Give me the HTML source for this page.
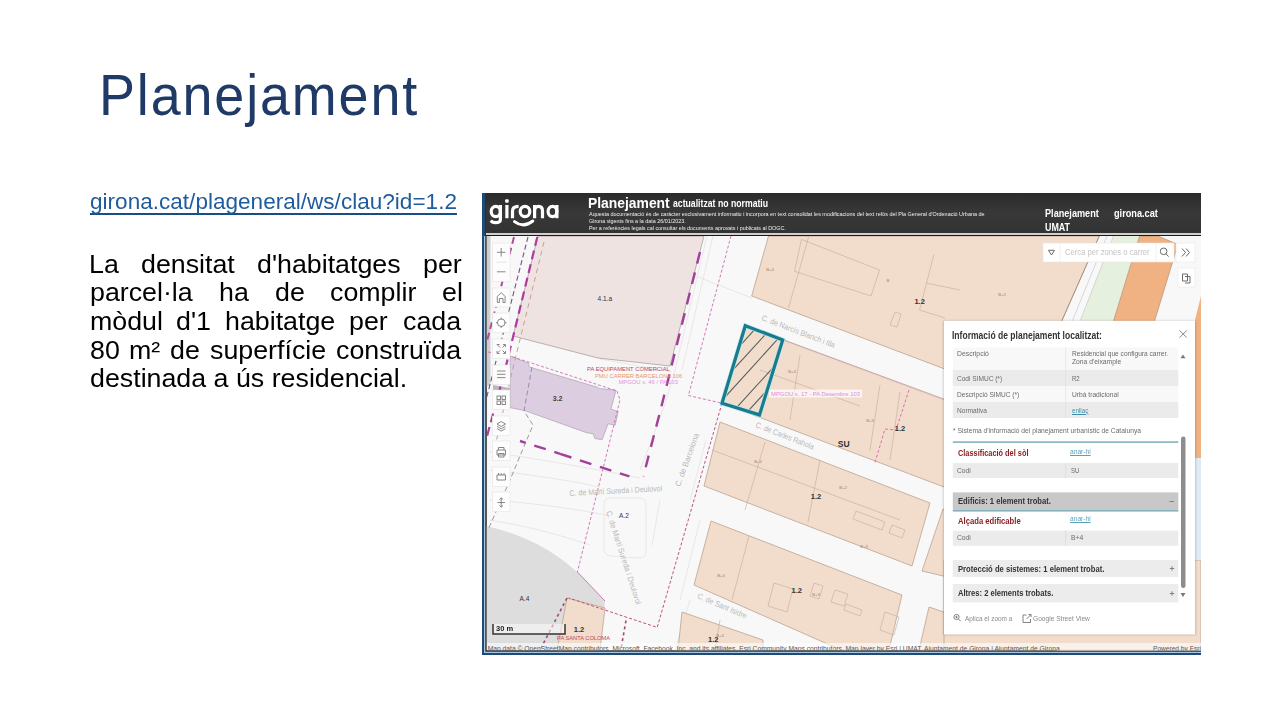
<!DOCTYPE html>
<html><head><meta charset="utf-8">
<style>
*{margin:0;padding:0;box-sizing:border-box}
html,body{width:1280px;height:720px;background:#fff;overflow:hidden;position:relative;font-family:"Liberation Sans",sans-serif}
.tx{position:absolute;white-space:nowrap;line-height:1;transform-origin:0 0;font-family:"Liberation Sans",sans-serif}
svg{position:absolute;left:0;top:0}
svg text{font-family:"Liberation Sans",sans-serif}
</style></head><body>
<svg width="1280" height="720" viewBox="0 0 1280 720">
<defs>
<clipPath id="mc"><rect x="486.8" y="236" width="714.2" height="414.5"/></clipPath>
<filter id="sh" x="-10%" y="-10%" width="120%" height="120%"><feGaussianBlur stdDeviation="1.2"/></filter>
</defs>
<!-- frame -->
<rect x="482" y="193" width="719" height="462" fill="#1d4a78"/>
<rect x="484" y="236" width="717" height="417" fill="#a9c6de"/>
<rect x="485.3" y="193" width="715.7" height="458.7" fill="#2a2a2a"/>
<linearGradient id="hg" x1="0" y1="0" x2="0" y2="1"><stop offset="0" stop-color="#2b2b2b"/><stop offset="0.5" stop-color="#383838"/><stop offset="1" stop-color="#333"/></linearGradient>
<rect x="486" y="193" width="715" height="40" fill="url(#hg)"/>
<rect x="486" y="233" width="715" height="2" fill="#cfcfcf"/>
<rect x="486" y="235" width="715" height="1.2" fill="#1a1a1a"/>
<g clip-path="url(#mc)">
<rect x="486" y="236" width="715" height="414" fill="#f8f8f8"/>
<rect x="486" y="236" width="4.5" height="150" fill="#cfcfcf"/>
<!-- road light lines -->
<g fill="none" stroke="#e2e2e2" stroke-width="0.8">
<path d="M707,236 L675,370 Q668,400 640,470"/>
<path d="M713,236 L682,370"/>
<path d="M752,298 L680,270"/>
<path d="M600,359 L672,372"/>
<path d="M490,452 Q560,462 640,478"/>
<path d="M490,470 Q560,478 600,487"/>
<path d="M490,500 Q560,505 610,516"/>
<path d="M490,520 Q540,528 590,545"/>
<path d="M604,505 Q603,498 612,498 L640,498 Q646,498 646,506 L646,552 Q646,558 638,558 L612,556 Q604,556 604,548 Z"/>
<path d="M660,500 L652,545"/>
<path d="M706,440 L690,500 M700,520 L680,600 M690,600 L675,650"/>
</g>
<!-- pink block 4.1.a -->
<polygon points="538,236 704,236 670,366 598,358 513,336" fill="#efe3e2" stroke="#8f8686" stroke-width="0.6"/>
<!-- purple block 3.2 -->
<polygon points="510.2,356 528.4,363.2 529.2,366.9 597.7,387.3 599.2,388.5 616,390.2 610.9,409.2 618.2,411.4 615.2,425.2 608,423.8 602.1,439.8 594.8,438.4 593.4,434 586,432.5 524.8,410.6 510.2,407.7" fill="#dccde0" stroke="#a096a8" stroke-width="0.6"/>
<polygon points="493,385 510,388 510,395 493,392" fill="#bdb5c0"/>
<!-- gray A.4 -->
<path d="M486,526 Q540,538 577,572 L605,601 L600,650 L486,650 Z" fill="#dddddd"/>
<!-- beige blocks -->
<g fill="#f2dccb" stroke="#b39a86" stroke-width="0.7">
<polygon points="768.5,236 1099.3,236 1026.8,400 751.7,296"/>
<polygon points="745.3,325.7 960,405 960,493 722,403.2"/>
<polygon points="720,422 930,503 912,566 704,486"/>
<polygon points="943,509 960,515 960,580 922,571"/>
<polygon points="711,521 902,595 889,650 841,650 694,585"/>
<polygon points="682,612 763,640 763,650 678,650"/>
<polygon points="929,607 1201,700 1201,650 919,650"/>
<rect x="944" y="560" width="257" height="90"/>
<polygon points="567,598 605,608 600,650 557,650"/>
</g>
<!-- parcel inner lines -->
<g fill="none" stroke="#c4ab98" stroke-width="0.6">
<path d="M808.6,237 L788.5,308 M801.5,239.4 L879.5,270 L871,296 L794.5,271.3 Z M933.8,254.8 L919.6,310 L945,318 M926,283 L960,290 M895,312 L890,325 L897,327 L901,314 Z"/>
<path d="M760,370 L860,406 M800,355 L790,420 M880,385 L870,450 M900,392 L890,460"/>
<path d="M712,450 L900,520 M765,442 L745,510 M820,460 L808,522 M856,511 L885,522 L882,530 L853,519 Z M892,525 L905,530 L902,538 L889,533 Z M774,583 L793,589 L787,612 L768,606 Z M814,583 L823,586 L819,599 L810,596 Z M835,590 L848,594 L844,606 L831,602 Z M846,604 L862,610 L860,616 L844,610 Z M885,612 L899,617 L894,635 L880,630 Z"/>
<path d="M749,536 L732,600"/>
<path d="M720,620 L715,650"/>
</g>
<polygon points="1113.5,236 1139.5,236 1089.3,400 1049,400" fill="#e6f0de"/>
<polygon points="1139.5,236 1158,236 1178,244.5 1130.5,400 1089.3,400" fill="#f0b282" stroke="#9a7a60" stroke-width="0.5"/>
<path d="M1099.3,236 L1026.8,400" stroke="#a08a78" stroke-width="0.8"/>
<path d="M1113.5,236 L1049,400 M1107,236 L1040,400" stroke="#c9c9c9" stroke-width="0.7"/>
<polygon points="1201,296 1201,458 1195,458 1195,320" fill="#f0b282"/>
<rect x="1195" y="458" width="6" height="102" fill="#dfeaf2"/>

<!-- dashed lines -->
<g fill="none" stroke-linecap="butt">
<path d="M514,237 L486,345" stroke="#b04aa0" stroke-width="2" stroke-dasharray="7,4"/>
<path d="M528,237 L486,400" stroke="#7d4d8d" stroke-width="1.1" stroke-dasharray="5,3"/>
<path d="M537.3,237 L505,370 L486,440" stroke="#b03aa0" stroke-width="2.2" stroke-dasharray="9,5"/>
<path d="M544,242 L512,372 L492,460" stroke="#c9a093" stroke-width="1" stroke-dasharray="5,4"/>
<path d="M700,252 L661.3,407 L643.3,476.4" stroke="#a0409a" stroke-width="2.4" stroke-dasharray="12,9"/>
<path d="M560,453.8 L629.4,476.4" stroke="#a0409a" stroke-width="2.4" stroke-dasharray="12,9"/>
<path d="M520,441 L560,453.8" stroke="#a0409a" stroke-width="2.4" stroke-dasharray="12,9" stroke-dashoffset="6"/>
<path d="M731,236 L688.4,395.5 L722,403.2" stroke="#d068b0" stroke-width="0.9" stroke-dasharray="3,2"/>
<path d="M488,352 L510,356 L617,391 L620,400 L577.4,572" stroke="#d068b0" stroke-width="0.9" stroke-dasharray="3,2"/>
<path d="M722,403.2 L657.2,627.4 L568.7,598" stroke="#c05080" stroke-width="1" stroke-dasharray="3,2"/>
<path d="M577.4,572 L605,601" stroke="#d068b0" stroke-width="0.9"/>
<path d="M532,367 L524,411 L533,425 L510,480 L488,530" stroke="#8a7a98" stroke-width="0.8" stroke-dasharray="5,3"/>
<path d="M567,598 L540,650" stroke="#a04a70" stroke-width="1.6" stroke-dasharray="3,3"/>
<path d="M626,620.5 L620.8,650" stroke="#a04a70" stroke-width="1.6" stroke-dasharray="3,3"/>
<path d="M909,390 L896,430 L885,429 L875,462.5" stroke="#d068b0" stroke-width="0.9" stroke-dasharray="3,2"/>
<path d="M782.7,340 L944,400" stroke="#d090c8" stroke-width="0.6" opacity="0.6"/>
</g>
<!-- teal parcel -->
<clipPath id="tp"><polygon points="745.3,325.7 782.7,340 759.5,414.9 722,403.2"/></clipPath>
<g stroke="#555f62" stroke-width="1.1" fill="none" clip-path="url(#tp)">
<path d="M720,368 L765,318 M720,384 L775,324 M716,407 L786,330 M728,417 L790,349 M740,420 L790,365 M760,420 L790,388"/>
</g>
<polygon points="745.3,325.7 782.7,340 759.5,414.9 722,403.2" fill="none" stroke="#bfeaf0" stroke-width="4.6"/>
<polygon points="745.3,325.7 782.7,340 759.5,414.9 722,403.2" fill="none" stroke="#187c8c" stroke-width="3.2"/>
<!-- labels -->
<g font-size="6.5" fill="#333" text-anchor="middle">
<text x="604.8" y="301">4.1.a</text>
<text x="557.6" y="400.5" font-size="7" font-weight="bold" fill="#444">3.2</text>
<text x="624" y="518">A.2</text>
<text x="524.5" y="601">A.4</text>
</g>
<g font-size="7.5" font-weight="bold" fill="#333" text-anchor="middle">
<text x="919.6" y="303.5">1.2</text>
<text x="843.75" y="446.5" font-size="8.5">SU</text>
<text x="900" y="430.5">1.2</text>
<text x="816" y="499">1.2</text>
<text x="796.7" y="593">1.2</text>
<text x="579" y="631.5">1.2</text>
<text x="713.3" y="641.5">1.2</text>
</g>
<g font-size="4.2" fill="#9a8070" text-anchor="middle">
<text x="770" y="271">B+4</text><text x="888" y="282">B</text><text x="870" y="422">B+3</text>
<text x="792" y="373">B+4</text><text x="758" y="463">B+4</text><text x="843" y="489">B+2</text><text x="864" y="548">B+3</text>
<text x="721" y="577">B+4</text><text x="816" y="596">B+3</text><text x="720" y="637">B+4</text><text x="1002" y="296">B+2</text>
</g>
<g font-size="5.8">
<text x="587" y="370.7" fill="#c04a55" textLength="82.8" lengthAdjust="spacingAndGlyphs">PA EQUIPAMENT COMERCIAL</text>
<text x="595" y="377.8" fill="#e39a68" textLength="87.3" lengthAdjust="spacingAndGlyphs">PMU CARRER BARCELONA 106</text>
<text x="618.5" y="384.4" fill="#e590e0" textLength="59.5" lengthAdjust="spacingAndGlyphs">MPGOU x. 46 / PA 103</text>
<rect x="769" y="389.5" width="93" height="8" fill="#fff" opacity="0.7"/>
<text x="771" y="396" fill="#e08ae0" textLength="89" lengthAdjust="spacingAndGlyphs">MPGOU x. 17 - PA Desembre 103</text>
<text x="557" y="639.5" fill="#c04a55" textLength="53" lengthAdjust="spacingAndGlyphs">PA SANTA COLOMA</text>
</g>
<g font-size="8" fill="#b8b8b8">
<text transform="translate(761,320) rotate(21)" textLength="78" lengthAdjust="spacingAndGlyphs">C. de Narcís Blanch i Illa</text>
<text transform="translate(755,427) rotate(21.4)" textLength="62" lengthAdjust="spacingAndGlyphs">C. de Carles Rahola</text>
<text transform="translate(680,487) rotate(-70)" textLength="56" lengthAdjust="spacingAndGlyphs">C. de Barcelona</text>
<text transform="translate(569.5,496) rotate(-3)" textLength="93" lengthAdjust="spacingAndGlyphs">C. de Martí Sureda i Deulovol</text>
<text transform="translate(606,512) rotate(72)" textLength="98" lengthAdjust="spacingAndGlyphs">C. de Martí Sureda i Deulovol</text>
<text transform="translate(696.7,598) rotate(23)" textLength="53" lengthAdjust="spacingAndGlyphs">C. de Sant Isidre</text>
</g>
<!-- attribution bar -->
<rect x="487" y="643" width="714" height="8" fill="#ffffff" fill-opacity="0.6"/>
<text x="487.7" y="651.2" font-size="8" fill="#555" textLength="572" lengthAdjust="spacingAndGlyphs">Map data © OpenStreetMap contributors, Microsoft, Facebook, Inc. and its affiliates, Esri Community Maps contributors, Map layer by Esri | UMAT, Ajuntament de Girona | Ajuntament de Girona</text>
<text x="1153" y="651.2" font-size="8" fill="#555" textLength="48" lengthAdjust="spacingAndGlyphs">Powered by Esri</text>
<!-- scale bar -->
<rect x="493" y="624" width="72" height="10" fill="#ffffff" fill-opacity="0.5"/>
<path d="M493,624 V634 H565 V624" fill="none" stroke="#333" stroke-width="1.5"/>
</g>
<!-- girona logo -->
<g fill="none" stroke="#fff" stroke-width="3.2">
<ellipse cx="495.8" cy="211.45" rx="4.6" ry="5.15"/>
<path d="M500.4,205 V219.5 Q500.4,222.7 495.5,222.7 Q492.5,222.7 490.7,220.6"/>
<path d="M506.9,205 V218.2"/>
<path d="M512.5,218.2 V211 Q512.5,206.3 518.6,206.3"/>
<ellipse cx="525" cy="211.45" rx="4.8" ry="5.15"/>
<path d="M534.6,218.2 V205 M534.6,211 Q534.6,206.3 538.55,206.3 Q542.5,206.3 542.5,211 V218.2"/>
<ellipse cx="552.5" cy="211.45" rx="4.4" ry="5.15"/>
<path d="M556.9,205 V218.2"/>
<path d="M514.5,221.6 Q523.5,228.5 532.8,221" stroke-width="3" stroke-linecap="round"/>
</g>
<rect x="505.1" y="199.3" width="3.6" height="3.4" rx="1.2" fill="#fff"/>
<!-- controls -->
<g fill="#fdfdfd" stroke="#e0e0e0" stroke-width="0.5">
<rect x="492.3" y="243" width="17.7" height="38.5"/>
<rect x="492.3" y="288" width="17.7" height="19"/>
<rect x="492.3" y="313" width="17.7" height="19.5"/>
<rect x="492.3" y="339" width="17.7" height="19.5"/>
<rect x="492.3" y="365" width="17.7" height="19.5"/>
<rect x="492.3" y="390" width="17.7" height="19.5"/>
<rect x="492.3" y="416" width="17.7" height="19.5"/>
<rect x="492.3" y="441" width="17.7" height="19.5"/>
<rect x="492.3" y="467" width="17.7" height="19.5"/>
<rect x="492.3" y="492" width="17.7" height="19.5"/>
</g>
<g fill="none" stroke="#7a7a7a" stroke-width="0.9">
<path d="M495.5,262.2 H506.8" stroke="#e4e4e4"/>
<path d="M497,252.3 H505.5 M501.2,248 V256.6"/>
<path d="M497,271.8 H505.5"/>
<path d="M497.3,302.5 V296.5 L501.2,292.5 L505.1,296.5 V302.5 H503 V298.5 H499.4 V302.5 Z"/>
<circle cx="501.2" cy="322.7" r="3.8"/>
<path d="M501.2,317.5 V319.5 M501.2,326 V328 M496,322.7 H498 M504.5,322.7 H506.5"/>
<path d="M497,345 V344.5 H499.5 M503,344.5 H505.5 V347 M505.5,351 V353.5 H503 M499.5,353.5 H497 V351 M497.5,345 L500,347.5 M505,345 L502.5,347.5 M505,353 L502.5,350.5 M497.5,353 L500,350.5"/>
<path d="M497,371 H505.5 M497,374.3 H505.5 M497,377.6 H505.5"/>
<rect x="497" y="396" width="3.5" height="3.5"/><rect x="502" y="396" width="3.5" height="3.5"/><rect x="497" y="401" width="3.5" height="3.5"/><rect x="502" y="401" width="3.5" height="3.5"/>
<path d="M497,424 L501.2,421.5 L505.5,424 L501.2,426.5 Z M497,426.3 L501.2,428.8 L505.5,426.3 M497,428.6 L501.2,431.1 L505.5,428.6"/>
<path d="M498.5,450 V447.5 H504 V450 M497,450 H505.5 V455 H497 Z M498.5,453.5 H504 V457 H498.5 Z"/>
<path d="M497,475 H505.5 V480 H497 Z M498.5,475 V473 M501.2,475 V473 M504,475 V473"/>
<path d="M501.2,498 V507 M497.5,502.5 H505 M499.5,499.5 L501.2,497.8 L503,499.5 M499.5,505.5 L501.2,507.2 L503,505.5"/>
</g>
<!-- search bar -->
<rect x="1043" y="243" width="131" height="19" fill="#fff" stroke="#e6e6e6" stroke-width="0.6"/>
<path d="M1060,243 V262 M1156,243 V262" stroke="#e8e8e8" stroke-width="0.6"/>
<rect x="1176" y="243" width="19" height="19" fill="#fff" stroke="#e6e6e6" stroke-width="0.6"/>
<rect x="1178" y="268" width="17" height="19" fill="#fff" stroke="#e6e6e6" stroke-width="0.6"/>
<g fill="none" stroke="#6a6a6a" stroke-width="1">
<path d="M1048.5,250.3 H1054.5 L1051.5,255 Z"/>
<circle cx="1163.6" cy="251.3" r="3.3"/><path d="M1166,253.7 L1168.6,256.6"/>
<path d="M1182,248.5 L1185.5,252.5 L1182,256.5 M1186,248.5 L1189.5,252.5 L1186,256.5"/>
<path d="M1182.5,274 H1187.5 V281 H1182.5 Z M1185,276.5 H1190 V283 H1185" />
</g>
<!-- info panel -->
<rect x="943.5" y="320.8" width="252" height="314" fill="#000" opacity="0.22" filter="url(#sh)"/>
<rect x="944" y="320.8" width="251" height="313.7" fill="#fff"/>
<rect x="952.8" y="347.5" width="225.5" height="22.5" fill="#f8f8f8"/>
<rect x="952.8" y="370" width="225.5" height="16" fill="#ebebeb"/>
<rect x="952.8" y="386" width="225.5" height="16" fill="#f8f8f8"/>
<rect x="952.8" y="402" width="225.5" height="16" fill="#ebebeb"/>
<rect x="1065.5" y="347.5" width="0.6" height="70.5" fill="#dcdcdc"/>
<rect x="952.8" y="441.3" width="225.5" height="1.6" fill="#86b2bb"/>
<rect x="952.8" y="463" width="225.5" height="15" fill="#ebebeb"/>
<rect x="1065.5" y="463" width="0.6" height="15" fill="#d6d6d6"/>
<rect x="952.8" y="492.4" width="225.5" height="17.8" fill="#c8c8c8"/>
<rect x="952.8" y="510" width="225.5" height="1.6" fill="#86b2bb"/>
<rect x="952.8" y="530.6" width="225.5" height="15.2" fill="#ebebeb"/>
<rect x="1065.5" y="530.6" width="0.6" height="15.2" fill="#d6d6d6"/>
<rect x="952.8" y="560" width="225.5" height="17" fill="#ececec"/>
<rect x="952.8" y="584" width="225.5" height="18.4" fill="#ececec"/>
<rect x="1181" y="436.6" width="4.5" height="151.4" rx="2.2" fill="#8d8d8d"/>
<g fill="none" stroke="#777" stroke-width="0.9">
<path d="M1179.6,330.4 L1186.8,337.6 M1186.8,330.4 L1179.6,337.6"/>
<path d="M1169.5,501.5 H1174"/>
<path d="M1169.8,568.5 H1174.2 M1172,566.3 V570.7"/>
<path d="M1169.8,593.5 H1174.2 M1172,591.3 V595.7"/>
<circle cx="956.5" cy="617" r="2.6"/><path d="M958.4,618.9 L960.8,621.3 M955.3,617 H957.7 M956.5,615.8 V618.2"/>
<path d="M1026.5,615 H1023 V622.5 H1030.5 V619 M1026.5,619 L1031,614.5 M1028.5,614.5 H1031 V617"/>
</g>
<path d="M1180.5,358.3 H1185.5 L1183,354.5 Z" fill="#777"/>
<path d="M1180.5,593 H1185.5 L1183,597 Z" fill="#777"/>
</svg>

<div class="tx" style="left:99.2px;top:66.50px;font-size:57.3px;color:#1f3a66;letter-spacing:2px;transform:scaleX(0.94)">Planejament</div>
<div class="tx" style="left:89.50px;top:191.58px;font-size:21.4px;color:#1f5c9e;font-weight:normal;transform:scaleX(1.0550);text-decoration:underline;text-decoration-thickness:1.7px;text-underline-offset:3.5px;text-decoration-color:#1a4d85;text-decoration-skip-ink:none;">girona.cat/plageneral/ws/clau?id=1.2</div>
<div class="tx" style="left:89.93px;top:366.44px;font-size:25px;color:#000;font-weight:normal;transform:scaleX(1.0714);">destinada a ús residencial.</div>
<div class="tx" style="left:587.70px;top:194.86px;font-size:15.4px;color:#fff;font-weight:bold;transform:scaleX(0.9012);">Planejament</div>
<div class="tx" style="left:672.80px;top:198.42px;font-size:11.2px;color:#fff;font-weight:bold;transform:scaleX(0.7764);">actualitzat no normatiu</div>
<div class="tx" style="left:588.60px;top:211.25px;font-size:6.2px;color:#f0f0f0;font-weight:normal;transform:scaleX(0.8789);">Aquesta documentació és de caràcter exclusivament informatiu i incorpora en text consolidat les modificacions del text refós del Pla General d&#x27;Ordenació Urbana de</div>
<div class="tx" style="left:588.60px;top:218.05px;font-size:6.2px;color:#f0f0f0;font-weight:normal;transform:scaleX(0.8708);">Girona vigents fins a la data 26/01/2023.</div>
<div class="tx" style="left:588.60px;top:224.95px;font-size:6.2px;color:#f0f0f0;font-weight:normal;transform:scaleX(0.8695);">Per a referències legals cal consultar els documents aprovats i publicats al DOGC.</div>
<div class="tx" style="left:1044.80px;top:208.33px;font-size:10.6px;color:#fff;font-weight:bold;transform:scaleX(0.8619);">Planejament</div>
<div class="tx" style="left:1044.80px;top:222.43px;font-size:10.6px;color:#fff;font-weight:bold;transform:scaleX(0.8405);">UMAT</div>
<div class="tx" style="left:1114.40px;top:208.33px;font-size:10.6px;color:#fff;font-weight:bold;transform:scaleX(0.8670);">girona.cat</div>
<div class="tx" style="left:952.20px;top:331.18px;font-size:10.3px;color:#333;font-weight:bold;transform:scaleX(0.8294);">Informació de planejament localitzat:</div>
<div class="tx" style="left:957.30px;top:349.57px;font-size:7.6px;color:#6a6a6a;font-weight:normal;transform:scaleX(0.9000);">Descripció</div>
<div class="tx" style="left:1071.50px;top:349.57px;font-size:7.6px;color:#6a6a6a;font-weight:normal;transform:scaleX(0.8656);">Residencial que configura carrer.</div>
<div class="tx" style="left:1071.50px;top:358.37px;font-size:7.6px;color:#6a6a6a;font-weight:normal;transform:scaleX(0.8868);">Zona d&#x27;eixample</div>
<div class="tx" style="left:957.30px;top:374.67px;font-size:7.6px;color:#6a6a6a;font-weight:normal;transform:scaleX(0.8619);">Codi SIMUC (*)</div>
<div class="tx" style="left:1071.50px;top:374.67px;font-size:7.6px;color:#6a6a6a;font-weight:normal;transform:scaleX(0.7908);">R2</div>
<div class="tx" style="left:957.30px;top:390.77px;font-size:7.6px;color:#6a6a6a;font-weight:normal;transform:scaleX(0.8634);">Descripció SIMUC (*)</div>
<div class="tx" style="left:1071.50px;top:390.77px;font-size:7.6px;color:#6a6a6a;font-weight:normal;transform:scaleX(0.8786);">Urbà tradicional</div>
<div class="tx" style="left:957.30px;top:406.77px;font-size:7.6px;color:#6a6a6a;font-weight:normal;transform:scaleX(0.8678);">Normativa</div>
<div class="tx" style="left:1071.50px;top:406.77px;font-size:7.6px;color:#3f8fae;font-weight:normal;transform:scaleX(0.8232);text-decoration:underline;">enllaç</div>
<div class="tx" style="left:952.80px;top:426.81px;font-size:7.2px;color:#6a6a6a;font-weight:normal;transform:scaleX(0.9328);">* Sistema d&#x27;informació del planejament urbanístic de Catalunya</div>
<div class="tx" style="left:958.40px;top:448.61px;font-size:9.2px;color:#8b1f24;font-weight:bold;transform:scaleX(0.8021);">Classificació del sòl</div>
<div class="tx" style="left:1070.30px;top:448.07px;font-size:7.6px;color:#5aa0b8;font-weight:normal;transform:scaleX(0.8768);text-decoration:underline;">anar-hi</div>
<div class="tx" style="left:957.20px;top:466.77px;font-size:7.6px;color:#6a6a6a;font-weight:normal;transform:scaleX(0.8788);">Codi</div>
<div class="tx" style="left:1071.00px;top:466.77px;font-size:7.6px;color:#6a6a6a;font-weight:normal;transform:scaleX(0.7948);">SU</div>
<div class="tx" style="left:958.40px;top:497.02px;font-size:8.6px;color:#333;font-weight:bold;transform:scaleX(0.8887);">Edificis: 1 element trobat.</div>
<div class="tx" style="left:958.40px;top:516.51px;font-size:9.2px;color:#8b1f24;font-weight:bold;transform:scaleX(0.8352);">Alçada edificable</div>
<div class="tx" style="left:1070.30px;top:514.77px;font-size:7.6px;color:#5aa0b8;font-weight:normal;transform:scaleX(0.8768);text-decoration:underline;">anar-hi</div>
<div class="tx" style="left:957.20px;top:534.47px;font-size:7.6px;color:#6a6a6a;font-weight:normal;transform:scaleX(0.8788);">Codi</div>
<div class="tx" style="left:1071.00px;top:534.47px;font-size:7.6px;color:#6a6a6a;font-weight:normal;transform:scaleX(0.8889);">B+4</div>
<div class="tx" style="left:958.40px;top:564.72px;font-size:8.6px;color:#333;font-weight:bold;transform:scaleX(0.8882);">Protecció de sistemes: 1 element trobat.</div>
<div class="tx" style="left:958.40px;top:589.42px;font-size:8.6px;color:#333;font-weight:bold;transform:scaleX(0.8833);">Altres: 2 elements trobats.</div>
<div class="tx" style="left:964.50px;top:615.07px;font-size:7.6px;color:#8a8a8a;font-weight:normal;transform:scaleX(0.8497);">Aplica el zoom a</div>
<div class="tx" style="left:1033.40px;top:615.07px;font-size:7.6px;color:#8a8a8a;font-weight:normal;transform:scaleX(0.8708);">Google Street View</div>
<div class="tx" style="left:1064.70px;top:248.21px;font-size:9.2px;color:#c4c4c4;font-weight:normal;transform:scaleX(0.8330);">Cerca per zones o carrer</div>
<div class="tx" style="left:496.00px;top:624.73px;font-size:8px;color:#222;font-weight:bold;transform:scaleX(0.9381);">30 m</div>
<div class="tx" style="left:88.86px;top:251.64px;font-size:25px;color:#000;transform:scaleX(1.0714)">La</div>
<div class="tx" style="left:141.06px;top:251.64px;font-size:25px;color:#000;transform:scaleX(1.0714)">densitat</div>
<div class="tx" style="left:257.24px;top:251.64px;font-size:25px;color:#000;transform:scaleX(1.0714)">d&#x27;habitatges</div>
<div class="tx" style="left:422.64px;top:251.64px;font-size:25px;color:#000;transform:scaleX(1.0714)">per</div>
<div class="tx" style="left:89.93px;top:280.34px;font-size:25px;color:#000;transform:scaleX(1.0714)">parcel·la</div>
<div class="tx" style="left:218.84px;top:280.34px;font-size:25px;color:#000;transform:scaleX(1.0714)">ha</div>
<div class="tx" style="left:274.83px;top:280.34px;font-size:25px;color:#000;transform:scaleX(1.0714)">de</div>
<div class="tx" style="left:329.75px;top:280.34px;font-size:25px;color:#000;transform:scaleX(1.0714)">complir</div>
<div class="tx" style="left:441.82px;top:280.34px;font-size:25px;color:#000;transform:scaleX(1.0714)">el</div>
<div class="tx" style="left:89.93px;top:309.04px;font-size:25px;color:#000;transform:scaleX(1.0714)">mòdul</div>
<div class="tx" style="left:176.23px;top:309.04px;font-size:25px;color:#000;transform:scaleX(1.0714)">d&#x27;1</div>
<div class="tx" style="left:225.18px;top:309.04px;font-size:25px;color:#000;transform:scaleX(1.0714)">habitatge</div>
<div class="tx" style="left:349.44px;top:309.04px;font-size:25px;color:#000;transform:scaleX(1.0714)">per</div>
<div class="tx" style="left:402.81px;top:309.04px;font-size:25px;color:#000;transform:scaleX(1.0714)">cada</div>
<div class="tx" style="left:89.93px;top:337.74px;font-size:25px;color:#000;transform:scaleX(1.0714)">80</div>
<div class="tx" style="left:129.04px;top:337.74px;font-size:25px;color:#000;transform:scaleX(1.0714)">m²</div>
<div class="tx" style="left:170.21px;top:337.74px;font-size:25px;color:#000;transform:scaleX(1.0714)">de</div>
<div class="tx" style="left:210.39px;top:337.74px;font-size:25px;color:#000;transform:scaleX(1.0714)">superfície</div>
<div class="tx" style="left:335.83px;top:337.74px;font-size:25px;color:#000;transform:scaleX(1.0714)">construïda</div>
</body></html>
